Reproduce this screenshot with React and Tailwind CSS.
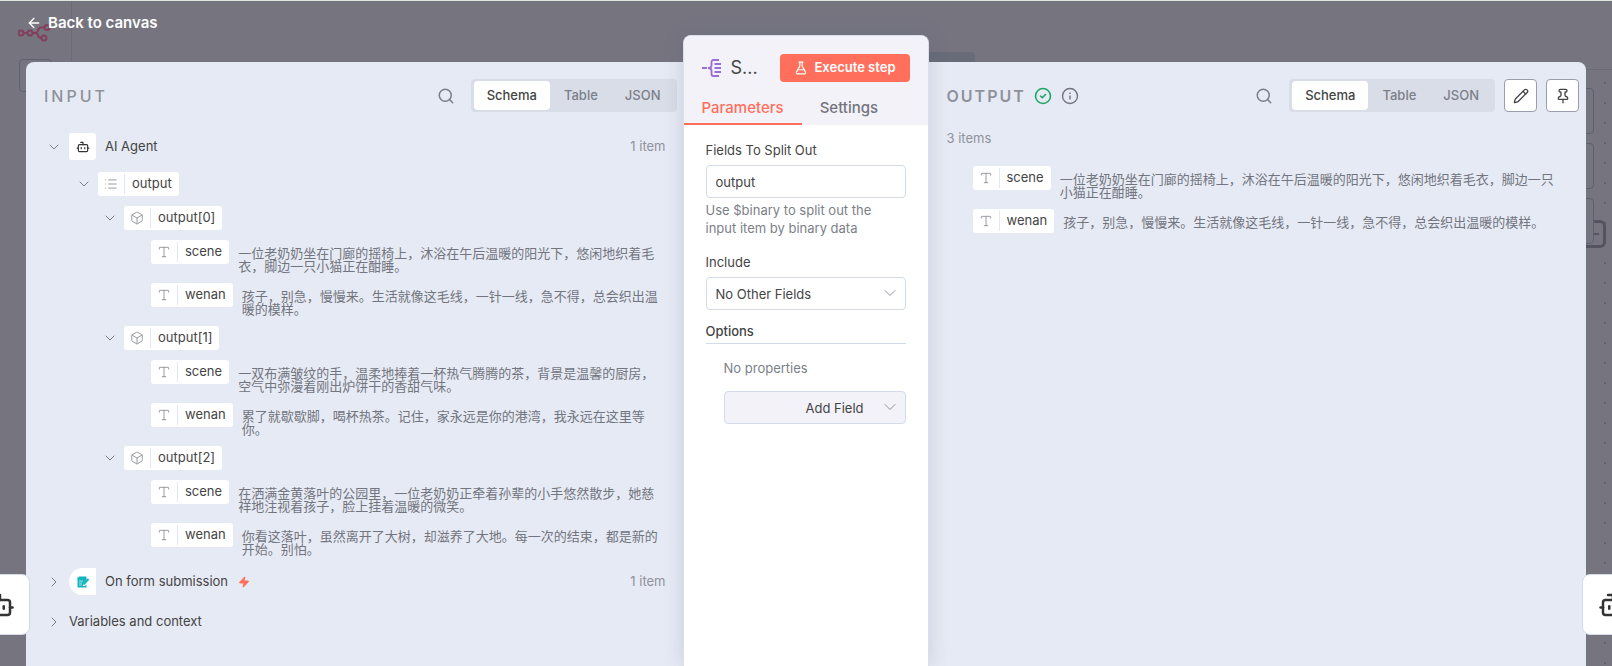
import { useState } from 'react';
import {
  ArrowLeft,
  Bot,
  Box,
  ChevronDown,
  ChevronRight,
  FlaskConical,
  List,
  Pencil,
  Pin,
  Search,
  Type,
  Zap,
} from 'lucide-react';

const items = [
  {
    scene: '一位老奶奶坐在门廊的摇椅上，沐浴在午后温暖的阳光下，悠闲地织着毛衣，脚边一只小猫正在酣睡。',
    wenan: '孩子，别急，慢慢来。生活就像这毛线，一针一线，急不得，总会织出温暖的模样。',
  },
  {
    scene: '一双布满皱纹的手，温柔地捧着一杯热气腾腾的茶，背景是温馨的厨房，空气中弥漫着刚出炉饼干的香甜气味。',
    wenan: '累了就歇歇脚，喝杯热茶。记住，家永远是你的港湾，我永远在这里等你。',
  },
  {
    scene: '在洒满金黄落叶的公园里，一位老奶奶正牵着孙辈的小手悠然散步，她慈祥地注视着孩子，脸上挂着温暖的微笑。',
    wenan: '你看这落叶，虽然离开了大树，却滋养了大地。每一次的结束，都是新的开始。别怕。',
  },
];

const pillIcons = { list: List, object: Box, string: Type };

function SplitOutIcon() {
  return (
    <svg width="20" height="20" viewBox="0 0 20 20" fill="none" stroke="#9b6dd7" strokeWidth="1.8">
      <path d="M0 10h5M6 10c2.500 0 3.500-.7 3.500-2.500V4c0-1.300.7-2 2-2H17M6 10c2.500 0 3.500.7 3.500 2.500V16c0 1.300.7 2 2 2H17" />
      <path d="M12.500 6H19M12.500 10H19M12.500 14H19" />
    </svg>
  );
}

function FormIcon() {
  return (
    <svg width="14" height="14" viewBox="0 0 14 14" fill="none">
      <path d="M3 1.500h7.500V5L7 8.500V11h2l1.500-1.500V12.500H1.500V4z" fill="#12b5bd" />
      <path d="M3 6h4M3 8h3M3 10h3" stroke="#c8f0f1" strokeWidth=".8" />
      <path d="M2 1.500v2h-1z" fill="#12b5bd" />
      <path d="M7.500 9.500 12.500 4" stroke="#12b5bd" strokeWidth="2" />
    </svg>
  );
}

function SuccessIcon() {
  return (
    <svg width="18" height="18" viewBox="0 0 18 18" fill="none" stroke="#22a565" strokeWidth="1.6" className="ml-2">
      <circle cx="9" cy="9" r="7.500" />
      <path d="m6.500 9 1.800 1.800L11.500 7.500" strokeLinecap="round" strokeLinejoin="round" />
    </svg>
  );
}

function InfoIcon() {
  return (
    <svg width="18" height="18" viewBox="0 0 18 18" fill="none" stroke="#72757e" strokeWidth="1.4" className="mr-auto ml-[9px]">
      <circle cx="9" cy="9" r="7.500" />
      <path d="M9 8.500V12.500M9 5.500v1.400" />
    </svg>
  );
}

function Logo() {
  return (
    <svg width="34" height="18" viewBox="0 0 34 18" fill="none" stroke="#833f5d" strokeWidth="2">
      <circle cx="3" cy="9" r="2.500" />
      <circle cx="12" cy="9" r="2.500" />
      <circle cx="29" cy="3.500" r="2.500" />
      <circle cx="26" cy="14" r="2.500" />
      <path d="M5.500 9h4M14.500 9h3c2 0 2-1 2.500-2.500S21 3.500 23 3.500h3.500M17.500 9c2 0 2 1 2.500 2.500s1 2.500 3.500 2.500" />
    </svg>
  );
}

function Pill({ type, name }) {
  const Icon = pillIcons[type];
  return (
    <span className="flex h-6 shrink-0 items-center rounded-[3px] bg-white text-[13px] text-[#444]">
      <span className="my-0.5 flex h-5 w-[27px] items-center justify-center border-r border-[#e3e7f1]">
        <Icon size={14} strokeWidth={1.5} className="text-[#8b8e96]" />
      </span>
      <span className="px-[7px]">{name}</span>
    </span>
  );
}

function ValueRow({ name, value }) {
  return (
    <li className="flex items-start gap-[9px]">
      <Pill type="string" name={name} />
      <span className="pt-[7px] text-[13px] leading-[13px] text-[#72757e]">{value}</span>
    </li>
  );
}

function Toggle({ open, onClick, label }) {
  const Icon = open ? ChevronDown : ChevronRight;
  return (
    <button type="button" aria-label={label} aria-expanded={open} onClick={onClick} className="shrink-0 text-[#7c7f88]">
      <Icon size={16} strokeWidth={1.5} />
    </button>
  );
}

function OutputItem({ index, item }) {
  const [open, setOpen] = useState(true);
  return (
    <li>
      <div className="flex items-center gap-1.5">
        <Toggle open={open} onClick={() => setOpen(!open)} label={`output[${index}]`} />
        <Pill type="object" name={`output[${index}]`} />
      </div>
      {open && (
        <ul className="mt-2.5 ml-[49px] space-y-2.5">
          <ValueRow name="scene" value={item.scene} />
          <ValueRow name="wenan" value={item.wenan} />
        </ul>
      )}
    </li>
  );
}

function ViewSwitch() {
  const [view, setView] = useState('Schema');
  return (
    <div className="flex h-[33px] items-center gap-px rounded bg-[#d9dde8] p-[3px] text-[13px] font-medium">
      {['Schema', 'Table', 'JSON'].map((name) => (
        <button
          key={name}
          type="button"
          onClick={() => setView(name)}
          className={`h-[29px] rounded px-[13px] ${view === name ? 'bg-white text-[#444]' : 'text-[#7c7f88]'}`}
        >
          {name}
        </button>
      ))}
    </div>
  );
}

function SearchButton() {
  return (
    <button type="button" aria-label="Search" className="mr-4 text-[#7c7f88]">
      <Search size={18} strokeWidth={2} />
    </button>
  );
}

function InputPanel() {
  const [agentOpen, setAgentOpen] = useState(true);
  const [outputOpen, setOutputOpen] = useState(true);
  return (
    <section className="min-w-0 flex-1 rounded-tl-lg bg-[#e6eaf4] pt-[17px] pr-[7px] pl-[18px]">
      <header className="flex h-[33px] items-center">
        <h2 className="mr-auto text-base font-medium tracking-[3px] text-[#8f929b]">INPUT</h2>
        <SearchButton />
        <ViewSwitch />
      </header>

      <div className="mt-[21px] mr-[11px] ml-0.5">
        <div className="flex items-center text-[13px]">
          <Toggle open={agentOpen} onClick={() => setAgentOpen(!agentOpen)} label="AI Agent" />
          <span className="mr-[9px] ml-[7px] flex size-[27px] items-center justify-center rounded-[3px] bg-white text-[#333]">
            <Bot size={14} />
          </span>
          <span className="mr-auto text-[#444]">AI Agent</span>
          <span className="text-[#8f929b]">1 item</span>
        </div>

        {agentOpen && (
          <div className="mt-3 ml-[30px]">
            <div className="flex items-center gap-1.5">
              <Toggle open={outputOpen} onClick={() => setOutputOpen(!outputOpen)} label="output" />
              <Pill type="list" name="output" />
            </div>
            {outputOpen && (
              <ul className="mt-2.5 ml-[26px] space-y-2.5">
                {items.map((item, i) => (
                  <OutputItem key={i} index={i} item={item} />
                ))}
              </ul>
            )}
          </div>
        )}

        <div className="mt-3 flex items-center text-[13px]">
          <Toggle open={false} label="On form submission" />
          <span className="mr-[9px] ml-[7px] flex size-[27px] items-center justify-center rounded-l-full rounded-r-[3px] bg-white">
            <FormIcon />
          </span>
          <span className="text-[#444]">On form submission</span>
          <Zap size={12} className="mr-auto ml-2.5 fill-[#ff6f5c] text-[#ff6f5c]" />
          <span className="text-[#8f929b]">1 item</span>
        </div>

        <div className="mt-[17px] flex items-center gap-[7px] text-[13px] text-[#444]">
          <Toggle open={false} label="Variables and context" />
          Variables and context
        </div>
      </div>
    </section>
  );
}

function ParametersPanel() {
  const [fields, setFields] = useState('output');
  return (
    <section className="z-10 -mx-px -mt-[27px] w-[246px] shrink-0 rounded-t-lg border border-b-0 border-[#dcdfea] bg-white shadow-[0_0_20px_rgba(80,90,130,0.2)]">
      <header className="rounded-t-lg bg-[#f2f2f8]">
        <div className="flex items-center px-[18px] pt-[18px]">
          <SplitOutIcon />
          <h1 className="mr-auto ml-[9px] text-lg leading-7 text-[#444]">S...</h1>
          <button
            type="button"
            className="flex h-7 items-center gap-1.5 rounded bg-[#ff6f5c] px-3.5 text-[13px] font-semibold whitespace-nowrap text-white"
          >
            <FlaskConical size={14} />
            Execute step
          </button>
        </div>
        <nav className="mt-[15px] flex text-[15px] leading-[22px] font-medium">
          <button type="button" className="border-b-2 border-[#ff6f5c] px-[18px] pb-1 text-[#ff6f5c]">
            Parameters
          </button>
          <button type="button" className="border-b-2 border-transparent px-[18px] pb-1 text-[#72757e]">
            Settings
          </button>
        </nav>
      </header>

      <div className="px-[22px] pt-4 text-[13px] leading-[18px] text-[#444]">
        <label htmlFor="fields" className="block">Fields To Split Out</label>
        <input
          id="fields"
          value={fields}
          onChange={(e) => setFields(e.target.value)}
          className="mt-1.5 h-[33px] w-full rounded border border-[#d3dae8] px-[9px] outline-none"
        />
        <p className="mt-[3px] text-[#7c7f88]">Use $binary to split out the input item by binary data</p>

        <label htmlFor="include" className="mt-4 block">Include</label>
        <div className="relative mt-1.5">
          <select id="include" className="h-[33px] w-full appearance-none rounded border border-[#d3dae8] px-[9px]">
            <option>No Other Fields</option>
          </select>
          <ChevronDown size={20} strokeWidth={1} className="pointer-events-none absolute top-1.5 right-1.5 text-[#7c7f88]" />
        </div>

        <h3 className="mt-3 border-b border-[#d3dae8] pb-[3px] font-medium">Options</h3>
        <div className="mt-[15px] ml-[18px]">
          <p className="text-[#7c7f88]">No properties</p>
          <div className="relative mt-3.5">
            <select
              aria-label="Add Field"
              className="h-[33px] w-full appearance-none rounded border border-[#d3dae8] bg-[#f2f2f8] pl-10 text-center"
            >
              <option>Add Field</option>
            </select>
            <ChevronDown size={20} strokeWidth={1} className="pointer-events-none absolute top-1.5 right-1.5 text-[#7c7f88]" />
          </div>
        </div>
      </div>
    </section>
  );
}

function OutputPanel() {
  return (
    <section className="min-w-0 flex-1 rounded-tr-lg bg-[#e6eaf4] pt-[17px] pr-[7px] pl-[19px]">
      <header className="flex h-[33px] items-center">
        <h2 className="text-base font-semibold tracking-[2px] text-[#8f929b]">OUTPUT</h2>
        <SuccessIcon />
        <InfoIcon />
        <SearchButton />
        <ViewSwitch />
        <button
          type="button"
          aria-label="Edit output"
          className="ml-[9px] flex size-[33px] items-center justify-center rounded border border-[#9a9dab] bg-white text-[#444]"
        >
          <Pencil size={16} strokeWidth={2} />
        </button>
        <button
          type="button"
          aria-label="Pin data"
          className="ml-[9px] flex size-[33px] items-center justify-center rounded border border-[#9a9dab] bg-white text-[#444]"
        >
          <Pin size={16} strokeWidth={2} />
        </button>
      </header>
      <p className="mt-[17px] text-[13px] text-[#8f929b]">3 items</p>
      <ul className="mt-[17px] mr-4 ml-[26px] space-y-2.5">
        <ValueRow name="scene" value={items[0].scene} />
        <ValueRow name="wenan" value={items[0].wenan} />
      </ul>
    </section>
  );
}

// dimmed editor behind the node details view
function Backdrop() {
  return (
    <div aria-hidden="true" className="absolute inset-0 overflow-hidden bg-[#76747f]">
      <div className="h-px bg-[#dfe6dc]" />
      <div className="absolute inset-y-px left-0 w-[72px] border-r border-[#6a6a79]" />
      <div className="absolute top-[24px] left-[18px]">
        <Logo />
      </div>
      <div className="absolute top-[59px] left-[19px] size-[33px] rounded border border-[#5f5f72]" />
      <div className="absolute top-[52px] left-[900px] h-8 w-[75px] rounded bg-[#686b78]" />
      <div className="absolute top-[69px] right-0 bottom-0 w-10 border-t border-[#6a6a79] bg-[radial-gradient(#625f6c_1px,transparent_1px)] bg-[size:20px_20px] bg-[position:3px_3px]" />
      <div className="absolute top-[220px] right-[6px] flex h-7 w-12 items-center justify-end rounded-md border-[3px] border-[#55535f] pr-1">
        <span className="h-0.5 w-1.5 bg-[#55535f]" />
      </div>
      <div className="absolute top-[88px] right-[18px] h-[46px] w-12 rounded border border-[#605f6d] bg-[#76747f]" />
      <div className="absolute top-[143px] right-[18px] h-[46px] w-12 rounded border border-[#605f6d] bg-[#76747f]" />
      <div className="absolute top-[198px] right-[18px] h-[46px] w-12 rounded border border-[#605f6d] bg-[#76747f]" />
    </div>
  );
}

export default function App() {
  return (
    <div className="relative flex min-h-screen flex-col overflow-hidden font-['Inter','Noto_Sans_CJK_SC',sans-serif]">
      <Backdrop />

      <div className="relative h-[62px] shrink-0 pt-[11px] pl-[26px]">
        <button type="button" className="flex items-center gap-1.5 text-[15px] leading-6 font-semibold text-white">
          <ArrowLeft size={16} />
          Back to canvas
        </button>
      </div>

      <main className="relative mx-[26px] flex flex-1">
        <InputPanel />
        <ParametersPanel />
        <OutputPanel />
      </main>

      <button
        type="button"
        aria-label="Previous node"
        className="absolute top-[574px] -left-[31px] z-20 flex size-[61px] items-center justify-center rounded-lg border border-[#d3dae8] bg-white text-[#333]"
      >
        <Bot size={30} />
      </button>
      <button
        type="button"
        aria-label="Next node"
        className="absolute top-[574px] -right-[31px] z-20 flex size-[61px] items-center justify-center rounded-lg border border-[#d3dae8] bg-white text-[#333]"
      >
        <Bot size={30} />
      </button>
    </div>
  );
}
